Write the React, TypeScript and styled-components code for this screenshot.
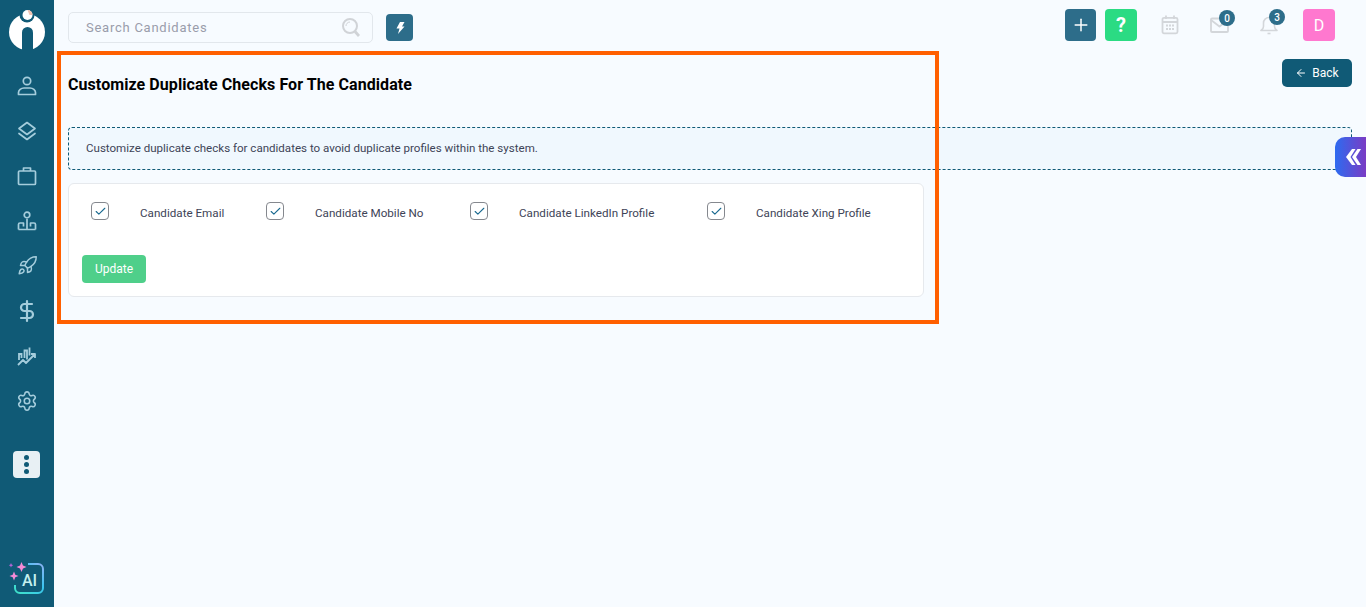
import React from "react";
import styled, { createGlobalStyle } from "styled-components";
import { Rocket, DollarSign, Settings, Plus, ArrowLeft, Check } from "lucide-react";

const Global = createGlobalStyle`
  html, body { margin: 0; padding: 0; height: 100%; overflow: hidden; }
  body { font-family: Roboto, "Liberation Sans", sans-serif; background: #f7fbff; }
  * { box-sizing: border-box; }
`;

const Shell = styled.div`
  display: flex;
  width: 1366px;
  height: 607px;
  position: relative;
  overflow: hidden;
`;

const Sidebar = styled.nav`
  width: 54px;
  flex: none;
  background: #105a76;
  display: flex;
  flex-direction: column;
  align-items: center;
  padding-top: 9px;
  color: #a5cddc;
`;

const LogoWrap = styled.div`
  height: 45px;
  margin-bottom: 9px;
  display: flex;
  align-items: flex-start;
`;

const NavList = styled.div`
  display: flex;
  flex-direction: column;
  align-items: center;
`;

const NavItem = styled.div`
  width: 54px;
  height: 45px;
  display: flex;
  align-items: center;
  justify-content: center;
`;

const MoreButton = styled.button`
  width: 27px;
  height: 27px;
  margin: 28px 1px 0 0;
  border: 0;
  border-radius: 4px;
  padding: 0;
  background: #e8f0f4;
  display: flex;
  flex-direction: column;
  align-items: center;
  justify-content: center;
  gap: 2px;
`;

const Dot = styled.span`
  width: 5px;
  height: 5px;
  border-radius: 50%;
  background: #105a76;
`;

const AiWrap = styled.div`
  margin-top: auto;
  margin-bottom: 10px;
  height: 38px;
`;

const Main = styled.main`
  flex: 1;
  min-width: 0;
  display: flex;
  flex-direction: column;
  padding: 0 14px;
`;

const TopBar = styled.header`
  height: 50px;
  display: flex;
  align-items: flex-start;
`;

const SearchBox = styled.div`
  width: 305px;
  height: 31px;
  margin-top: 12px;
  border: 1px solid #e2e7ec;
  border-radius: 5px;
  display: flex;
  align-items: center;
  justify-content: space-between;
  padding: 0 12px 0 17px;
  font-size: 13px;
  letter-spacing: 0.75px;
  color: #9a9dab;
`;

const BoltButton = styled.div`
  width: 27px;
  height: 27px;
  margin: 14px 0 0 13px;
  border-radius: 4px;
  background: #2d6d8a;
  display: flex;
  align-items: center;
  justify-content: center;
`;

const TopRight = styled.div`
  margin-left: auto;
  margin-right: 17px;
  margin-top: 9px;
  display: flex;
  align-items: flex-start;
`;

const ActionButton = styled.div<{ $bg: string; $w: number; $ml?: number; $size?: number; $weight?: number }>`
  width: ${(p) => p.$w}px;
  height: 32px;
  margin-left: ${(p) => p.$ml ?? 0}px;
  border-radius: 4px;
  background: ${(p) => p.$bg};
  color: #fff;
  display: flex;
  align-items: center;
  justify-content: center;
  font-size: ${(p) => p.$size ?? 16}px;
  font-weight: ${(p) => p.$weight ?? 400};
`;

const TopIcon = styled.div<{ $ml: number }>`
  position: relative;
  width: 20px;
  height: 20px;
  margin: 6px 0 0 ${(p) => p.$ml}px;
  color: #d3d6da;
`;

const Badge = styled.span<{ $top: number; $right: number }>`
  position: absolute;
  top: ${(p) => p.$top}px;
  right: ${(p) => p.$right}px;
  width: 16px;
  height: 16px;
  border-radius: 50%;
  background: #2d6d8a;
  color: #fff;
  font-size: 10px;
  font-weight: 500;
  display: flex;
  align-items: center;
  justify-content: center;
`;

const TitleRow = styled.div`
  height: 77px;
  display: flex;
  align-items: flex-start;
  justify-content: space-between;
`;

const Title = styled.h1`
  margin: 25px 0 0;
  font-size: 16px;
  line-height: 19px;
  font-weight: 700;
  letter-spacing: 0.07px;
  color: #000;
`;

const BackButton = styled.button`
  width: 70px;
  height: 28px;
  margin-top: 9px;
  border: 0;
  border-radius: 5px;
  background: #105a76;
  color: #fff;
  font: 400 12px Roboto, sans-serif;
  display: flex;
  align-items: center;
  justify-content: center;
  gap: 5px;
`;

const InfoBox = styled.div`
  height: 43px;
  border: 1px dashed #105a76;
  border-radius: 4px;
  background: #f0f8fe;
  padding: 0 17px 1px;
  display: flex;
  align-items: center;
  font-size: 11.55px;
  color: #3e4457;
`;

const Card = styled.section`
  width: 856px;
  height: 114px;
  margin-top: 13px;
  border: 1px solid #e6e9ed;
  border-radius: 6px;
  background: #fff;
  padding: 18px 13px 0;
`;

const CheckRow = styled.div`
  display: grid;
  grid-template-columns: 175px 204px 237px auto;
  padding-left: 9px;
  height: 53px;
`;

const CheckItem = styled.label`
  display: flex;
  align-items: flex-start;
  font-size: 11.65px;
  color: #3e4457;
`;

const Box = styled.span`
  width: 18px;
  height: 18px;
  flex: none;
  border: 1px solid #85888e;
  border-radius: 4px;
  background: #fff;
  color: #1a6a90;
  display: flex;
  align-items: center;
  justify-content: center;
`;

const CheckLabel = styled.span`
  margin-left: 31px;
  padding-top: 4px;
  line-height: 15px;
`;

const UpdateButton = styled.button`
  width: 64px;
  height: 28px;
  border: 0;
  border-radius: 4px;
  background: #4fcf8a;
  color: #fff;
  font: 400 12px Roboto, sans-serif;
`;

const Drawer = styled.div`
  position: absolute;
  top: 137px;
  right: 0;
  width: 31px;
  height: 40px;
  border-radius: 10px 0 0 10px;
  background: linear-gradient(90deg, #2d6bf0, #7a3cc4);
  display: flex;
  align-items: center;
  padding-left: 10px;
`;

const Highlight = styled.div`
  position: absolute;
  left: 57px;
  top: 51px;
  width: 882px;
  height: 273px;
  border: 4px solid #ff5f00;
  pointer-events: none;
`;

const Logo = () => (
  <svg width="38" height="45" viewBox="0 0 38 45">
    <circle cx="19" cy="23" r="18" fill="#fff" />
    <circle cx="19" cy="6" r="7.500" fill="#105a76" />
    <path d="M14 42V23.500a5.500 5.500 0 0 1 11 0V42z" fill="#105a76" />
    <circle cx="19.500" cy="6" r="5" fill="#fff" />
    <path d="M19.500 1a5 5 0 0 1 5 5h-3z" fill="#f0c3b2" />
  </svg>
);

const PersonIcon = () => (
  <svg width="20" height="20" viewBox="0 0 20 20" fill="none" stroke="currentColor" strokeWidth="1.700">
    <circle cx="10" cy="5" r="3.700" />
    <path d="M1.500 18.500v-2C1.500 14 4 12 7 12h6c3 0 5.500 2 5.500 4.500v2z" strokeLinejoin="round" />
  </svg>
);

const LayersIcon = () => (
  <svg width="20" height="20" viewBox="0 0 20 20" fill="none" stroke="currentColor" strokeWidth="1.700" strokeLinejoin="round" strokeLinecap="round">
    <path d="M10 1.500l8 6-8 6-8-6z" />
    <path d="M2 12.500l8 6 8-6" />
  </svg>
);

const CaseIcon = () => (
  <svg width="20" height="20" viewBox="0 0 20 20" fill="none" stroke="currentColor" strokeWidth="1.700" strokeLinejoin="round">
    <rect x="1.500" y="5" width="17" height="13.500" rx="1" />
    <path d="M6.500 5V2h7v3" />
  </svg>
);

const OrgIcon = () => (
  <svg width="20" height="20" viewBox="0 0 20 20" fill="none" stroke="currentColor" strokeWidth="1.700">
    <circle cx="10" cy="4" r="2.800" />
    <path d="M10 8v10M1.500 18.500v-5c0-1 .5-1.500 1.500-1.500h3.500v3.500M18.500 18.500v-5c0-1-.5-1.500-1.500-1.500h-3.500v3.500M1.500 18.500h17" strokeLinejoin="round" />
  </svg>
);

const ChartIcon = () => (
  <svg width="20" height="20" viewBox="0 0 20 20" fill="none" stroke="currentColor" strokeWidth="1.800">
    <path d="M1 19l5-5 3 3 9-9M14 8h4v4" strokeLinejoin="round" />
    <path d="M2 14V8h2.500v4M7.500 12V4.500H10v9M12.500 9.500V1.500" />
  </svg>
);

const AiIcon = () => (
  <svg width="40" height="38" viewBox="0 0 40 38">
    <defs>
      <linearGradient id="aig" x1="0" y1="1" x2="1" y2="0">
        <stop offset="0" stopColor="#3fe3c8" />
        <stop offset="0.6" stopColor="#3ac4f0" />
        <stop offset="1" stopColor="#8fb2f5" />
      </linearGradient>
    </defs>
    <path d="M21 5h10a5 5 0 0 1 5 5v19a5 5 0 0 1-5 5H13a5 5 0 0 1-5-5v-3" fill="none" stroke="url(#aig)" strokeWidth="2" />
    <path d="M14.500 3l1.500 3.500L19.500 8 16 9.500 14.500 13 13 9.500 9.500 8 13 6.500z" fill="#f58ad6" />
    <path d="M7 12.500l1.300 3.200L11.500 17l-3.200 1.300L7 21.500l-1.300-3.200L2.500 17l3.200-1.300z" fill="#f58ad6" />
    <path d="M4 4l.7 1.500L6.200 6.200 4.700 7 4 8.500 3.300 7 1.800 6.200l1.500-.7z" fill="#b565d8" />
    <text x="15" y="27" fontFamily="Roboto, sans-serif" fontSize="16" fontWeight="500" fill="#c4f0ee">AI</text>
  </svg>
);

const SearchGlyph = () => (
  <svg width="18" height="19" viewBox="0 0 18 19" fill="none" stroke="#d0d3d7" strokeWidth="2">
    <circle cx="8" cy="8" r="7" />
    <path d="M13 13.500l4 4.500" strokeWidth="2.800" />
    <path d="M4 8c0-2 1.500-4 4-4" strokeWidth="1" />
  </svg>
);

const Bolt = () => (
  <svg width="10" height="12" viewBox="0 0 10 12">
    <path d="M5 0h4.500L7 4.500h2.500L3 12l1.500-5.500H1.500z" fill="#fff" />
  </svg>
);

const CalendarIcon = () => (
  <svg width="20" height="20" viewBox="0 0 20 20" fill="none" stroke="currentColor" strokeWidth="1.800">
    <rect x="2.500" y="2.800" width="15" height="15.500" rx="1.500" />
    <path d="M2.500 7h15M6 .5v3.500M14 .5v3.500" />
    <path d="M6 10.500h8M6 14h8" strokeWidth="1.800" strokeDasharray="2 1" />
  </svg>
);

const MailIcon = () => (
  <svg width="20" height="20" viewBox="0 0 20 20" fill="none" stroke="currentColor" strokeWidth="1.800" strokeLinejoin="round">
    <rect x="1" y="3.500" width="17" height="13.500" rx="1" />
    <path d="M1 5l8.500 6.500L18 5" />
  </svg>
);

const BellIcon = () => (
  <svg width="20" height="20" viewBox="0 0 20 20" fill="none" stroke="currentColor" strokeWidth="1.600" strokeLinejoin="round">
    <path d="M2 15.500h16c-1.500-1-2.500-2-2.500-4V8a5.500 5.500 0 0 0-11 0v3.500c0 2-1 3-2.500 4z" />
    <path d="M8.500 18.500h3" />
  </svg>
);

const DoubleChevron = () => (
  <svg width="16" height="16" viewBox="0 0 16 16" fill="#fff">
    <path d="M7 0h3.500L5.500 8l5 8H7L1 8zM12.500 0H16l-5 8 5 8h-3.500L7 8z" />
  </svg>
);

const checks = ["Candidate Email", "Candidate Mobile No", "Candidate LinkedIn Profile", "Candidate Xing Profile"];

export default function App() {
  return (
    <Shell>
      <Global />
      <Sidebar>
        <LogoWrap><Logo /></LogoWrap>
        <NavList>
          <NavItem><PersonIcon /></NavItem>
          <NavItem><LayersIcon /></NavItem>
          <NavItem><CaseIcon /></NavItem>
          <NavItem><OrgIcon /></NavItem>
          <NavItem><Rocket size={21} strokeWidth={1.7} /></NavItem>
          <NavItem><DollarSign size={24} strokeWidth={2.2} /></NavItem>
          <NavItem><ChartIcon /></NavItem>
          <NavItem><Settings size={22} strokeWidth={1.7} /></NavItem>
        </NavList>
        <MoreButton aria-label="More"><Dot /><Dot /><Dot /></MoreButton>
        <AiWrap><AiIcon /></AiWrap>
      </Sidebar>
      <Main>
        <TopBar>
          <SearchBox>
            Search Candidates
            <SearchGlyph />
          </SearchBox>
          <BoltButton><Bolt /></BoltButton>
          <TopRight>
            <ActionButton $bg="#2d6d8a" $w={31}><Plus size={20} strokeWidth={1.8} /></ActionButton>
            <ActionButton $bg="#2bdb83" $w={32} $ml={9} $size={20} $weight={700}>?</ActionButton>
            <TopIcon $ml={23}><CalendarIcon /></TopIcon>
            <TopIcon $ml={30}><MailIcon /><Badge $top={-5} $right={-5}>0</Badge></TopIcon>
            <TopIcon $ml={29}><BellIcon /><Badge $top={-6} $right={-6}>3</Badge></TopIcon>
            <ActionButton $bg="#ff78cf" $w={32} $ml={24}>D</ActionButton>
          </TopRight>
        </TopBar>
        <TitleRow>
          <Title>Customize Duplicate Checks For The Candidate</Title>
          <BackButton><ArrowLeft size={12} />Back</BackButton>
        </TitleRow>
        <InfoBox>Customize duplicate checks for candidates to avoid duplicate profiles within the system.</InfoBox>
        <Card>
          <CheckRow>
            {checks.map((c) => (
              <CheckItem key={c}>
                <Box><Check size={13} strokeWidth={2} /></Box>
                <CheckLabel>{c}</CheckLabel>
              </CheckItem>
            ))}
          </CheckRow>
          <UpdateButton>Update</UpdateButton>
        </Card>
      </Main>
      <Drawer><DoubleChevron /></Drawer>
      <Highlight />
    </Shell>
  );
}
